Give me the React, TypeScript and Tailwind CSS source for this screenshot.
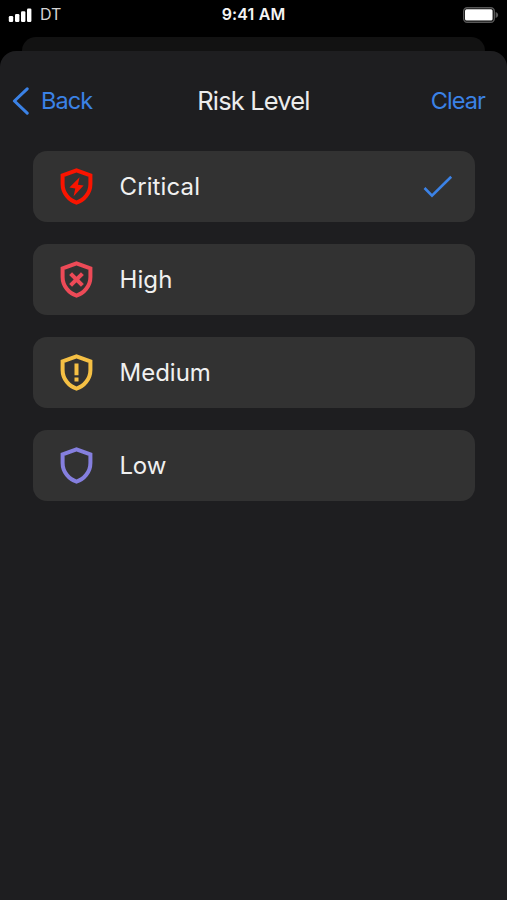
import type { ReactNode } from "react";

const SHIELD =
  "M16.5 2.3 L30.4 7.4 V16 C30.4 25 24 32.4 16.5 34.6 C9 32.4 2.6 25 2.6 16 V7.4 Z";

function Shield({ color, children }: { color: string; children?: ReactNode }) {
  return (
    <svg width="33" height="37" viewBox="0 0 33 37" fill="none" className={color}>
      <path d={SHIELD} stroke="currentColor" strokeWidth="4" />
      {children}
    </svg>
  );
}

const levels: { name: string; tracking: string; icon: ReactNode; selected?: boolean }[] = [
  {
    name: "Critical",
    tracking: "tracking-[0.12px]",
    selected: true,
    icon: (
      <Shield color="text-[#fa1400]">
        <path d="M19.6 9.2 L9.4 19.6 L15.3 20.6 L13.6 28.2 L23.6 17.6 L17.9 16.8 Z" fill="currentColor" />
      </Shield>
    ),
  },
  {
    name: "High",
    tracking: "tracking-[0.1px]",
    icon: (
      <Shield color="text-[#ed4a57]">
        <path d="M10.6 12.6 L22.4 24.4 M22.4 12.6 L10.6 24.4" stroke="currentColor" strokeWidth="4.1" />
      </Shield>
    ),
  },
  {
    name: "Medium",
    tracking: "tracking-[0px]",
    icon: (
      <Shield color="text-[#f5c044]">
        <path d="M16.5 9.5 V21.3 M16.5 23.5 V27.5" stroke="currentColor" strokeWidth="4" />
      </Shield>
    ),
  },
  { name: "Low", tracking: "tracking-[-0.2px]", icon: <Shield color="text-[#857fdf]" /> },
];

function StatusBar() {
  return (
    <div className="grid h-[37px] grid-cols-3 items-start px-2 pt-[6px] text-[#f4f4f4]">
      <div className="flex items-center">
        <svg width="24" height="15" viewBox="0 0 24 15" fill="#fff">
          <rect x="0.8" y="9" width="4.4" height="6" rx="1.2" />
          <rect x="7" y="7" width="4.4" height="8" rx="1.2" />
          <rect x="13" y="4.3" width="4.4" height="10.7" rx="1.2" />
          <rect x="19" y="1.6" width="4.4" height="13.4" rx="1.2" />
        </svg>
        <span className="ml-2 text-[16px] leading-4 text-[#d4d4d4]">DT</span>
      </div>
      <span className="text-center text-[16px] leading-[17px] font-semibold tracking-[0.15px] whitespace-nowrap">9:41 AM</span>
      <svg className="mt-px justify-self-end" width="36" height="16" viewBox="0 0 36 16" fill="none">
        <rect x="0.7" y="0.7" width="30.6" height="14.6" rx="3.5" stroke="#585858" strokeWidth="1.4" />
        <rect x="2" y="2.2" width="27.6" height="11.2" rx="1.5" fill="#fff" />
        <path d="M32.6 5 C36 6 36 10 32.6 11 Z" fill="#585858" />
      </svg>
    </div>
  );
}

export default function App() {
  return (
    <div className="flex h-[900px] w-[507px] flex-col overflow-hidden bg-black font-[Inter,'Liberation_Sans',sans-serif]">
      <StatusBar />
      <div className="mx-[22px] h-[14px] rounded-t-[14px] bg-[#121212]" />
      <main className="flex-1 rounded-t-[16px] bg-[#1e1e20]">
        <header className="grid h-[100px] grid-cols-3 items-center px-[12px] text-[24px] text-[#3b82e6]">
          <button className="flex items-center">
            <svg width="18" height="28" viewBox="0 0 18 28" fill="none">
              <path d="M15.2 1.8 L2.4 14 L15.2 26.2" stroke="currentColor" strokeWidth="3" strokeLinecap="round" strokeLinejoin="round" />
            </svg>
            <span className="ml-[11px] text-[23.5px] tracking-[-0.9px]">Back</span>
          </button>
          <h1 className="text-center text-[25.5px] tracking-[-0.85px] whitespace-nowrap text-[#ececec]">Risk Level</h1>
          <button className="pr-[10px] text-right text-[23.5px] tracking-[-0.9px]">Clear</button>
        </header>
        <ul className="mr-[32px] ml-[33px] flex flex-col gap-[22px]">
          {levels.map((level) => (
            <li key={level.name} className="flex h-[71px] items-center rounded-[14px] bg-[#323232] pr-[22.5px] pl-[27px]">
              {level.icon}
              <span className={"ml-[26.5px] flex-1 pt-px text-[24px] text-[#f0f0f0] " + level.tracking}>{level.name}</span>
              {level.selected && (
                <svg width="30" height="24" viewBox="0 0 30 24" fill="none">
                  <path d="M1.5 13 L9 20.6 L28.2 1.8" stroke="#3b82e6" strokeWidth="2.6" />
                </svg>
              )}
            </li>
          ))}
        </ul>
      </main>
    </div>
  );
}
